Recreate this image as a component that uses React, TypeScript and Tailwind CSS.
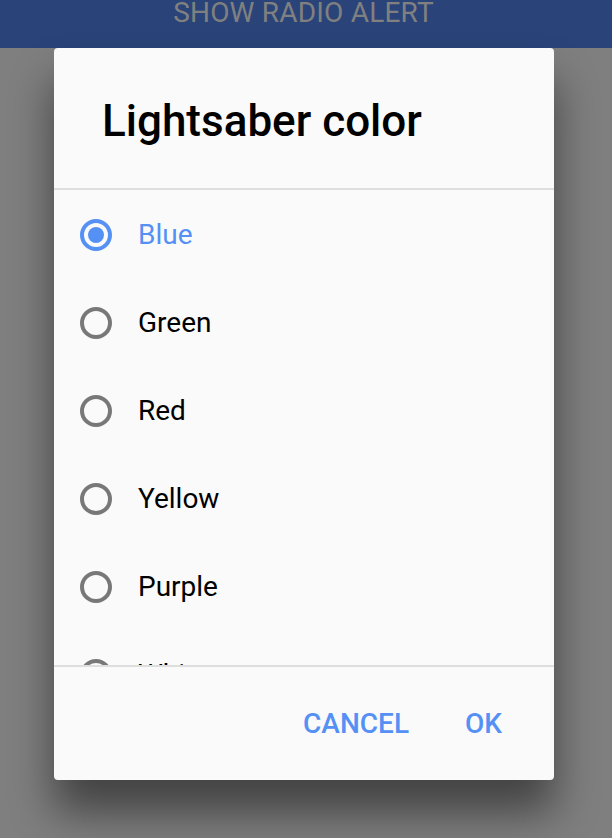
import React, { useState } from 'react';

const colors = ['Blue', 'Green', 'Red', 'Yellow', 'Purple', 'White'];

function Radio({ checked }: { checked: boolean }) {
  return (
    <span
      className={`flex h-[32px] w-[32px] shrink-0 items-center justify-center rounded-full border-[4px] ${
        checked ? 'border-[#5590f5]' : 'border-[#787878]'
      }`}
    >
      {checked && <span className="h-[16px] w-[16px] rounded-full bg-[#5590f5]" />}
    </span>
  );
}

export default function App() {
  const [selected, setSelected] = useState('Blue');

  return (
    <div className="flex h-[838px] w-[612px] flex-col overflow-hidden bg-[#7f7f7f] font-['Roboto',sans-serif]">
      {/* page button, dimmed behind the backdrop */}
      <div className="flex h-[48px] shrink-0 justify-center bg-[#2a4479] pr-[5px]">
        <span className="-mt-[1px] text-[28px] leading-[28px] tracking-[0.2px] text-[#808080]">SHOW RADIO ALERT</span>
      </div>

      <div className="ml-[54px] flex h-[732px] w-[500px] flex-col rounded-[4px] bg-[#fafafa] shadow-[0_32px_44px_rgba(0,0,0,0.48)]">
        <div className="h-[142px] shrink-0 border-b-2 border-[#dedede] pl-[48px] pt-[47px]">
          <h2 className="text-[44px] font-medium leading-[52px] text-black">Lightsaber color</h2>
        </div>

        <div className="h-[477px] shrink-0 overflow-hidden border-b-2 border-[#dedede]">
          {colors.map((c) => (
            <button
              key={c}
              onClick={() => setSelected(c)}
              className="flex h-[88px] w-full items-center pl-[26px] pt-[1px] text-left"
            >
              <Radio checked={selected === c} />
              <span
                className={`ml-[26px] text-[28px] ${selected === c ? 'text-[#5590f5]' : 'text-black'}`}
              >
                {c}
              </span>
            </button>
          ))}
        </div>

        <div className="flex flex-1 items-center justify-end pr-[16px]">
          <button className="mr-[16px] px-[20px] text-[28px] font-medium text-[#5590f5]">CANCEL</button>
          <button className="mr-[16px] px-[20px] text-[28px] font-medium text-[#5590f5]">OK</button>
        </div>
      </div>
    </div>
  );
}
